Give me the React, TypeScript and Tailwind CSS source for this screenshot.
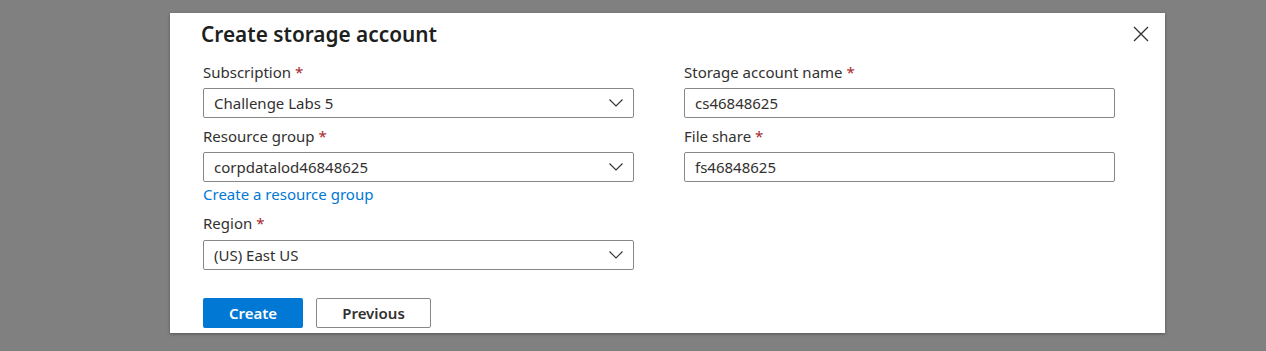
import React from "react";

const font = { fontFamily: '"Noto Sans", "Open Sans", Arial, sans-serif' };

function Label({ text }: { text: string }) {
  return (
    <div className="h-5 text-[15px] leading-5 text-[#323130]">
      {text} <span className="text-[#a4262c]">*</span>
    </div>
  );
}

function Chevron() {
  return (
    <svg width="14" height="8" viewBox="0 0 14 8" fill="none" className="text-[#323130]">
      <path d="M0.5 0.5 L7 7 L13.5 0.5" stroke="currentColor" strokeWidth="1.1" />
    </svg>
  );
}

function Select({ value }: { value: string }) {
  return (
    <div className="mt-[6px] flex h-[30px] w-[431px] items-center justify-between rounded-[2px] border border-[#8a8886] bg-white pl-[10px] pr-[10px] text-[15px] text-[#323130]">
      <span>{value}</span>
      <Chevron />
    </div>
  );
}

function Input({ value }: { value: string }) {
  return (
    <div className="mt-[6px] flex h-[30px] w-[431px] items-center rounded-[2px] border border-[#8a8886] bg-white pl-[10px] text-[15px] text-[#323130]">
      {value}
    </div>
  );
}

export default function App() {
  return (
    <div className="h-[351px] w-[1266px] overflow-hidden bg-[#808080]" style={font}>
      <div className="relative ml-[170px] mt-[13px] h-[320px] w-[995px] bg-white pl-[33px] shadow-[0_1px_3px_rgba(0,0,0,0.35)]">
        <button className="absolute right-[15px] top-[12px] flex h-[18px] w-[18px] items-center justify-center text-[#323130]">
          <svg width="16" height="16" viewBox="0 0 16 16" fill="none">
            <path d="M1 1 L15 15 M15 1 L1 15" stroke="currentColor" strokeWidth="1.3" />
          </svg>
        </button>
        <div className="-ml-[2px] h-[49px] pt-[6px] text-[20.8px] font-semibold leading-[30px] text-[#201f1e]">
          Create storage account
        </div>
        <div className="flex gap-[50px]">
          <div className="flex flex-col">
            <Label text="Subscription" />
            <Select value="Challenge Labs 5" />
            <div className="mt-[8px]">
              <Label text="Resource group" />
            </div>
            <Select value="corpdatalod46848625" />
            <div className="mt-[2px] h-5 text-[15px] leading-5 text-[#0078d4]">Create a resource group</div>
            <div className="mt-[9px]">
              <Label text="Region" />
            </div>
            <div className="mt-[1px]">
              <Select value="(US) East US" />
            </div>
          </div>
          <div className="flex flex-col">
            <Label text="Storage account name" />
            <Input value="cs46848625" />
            <div className="mt-[8px]">
              <Label text="File share" />
            </div>
            <Input value="fs46848625" />
          </div>
        </div>
        <div className="mt-[28px] flex gap-[13px]">
          <button className="h-[30px] w-[100px] rounded-[2px] bg-[#0078d4] text-[15px] font-semibold text-white">
            Create
          </button>
          <button className="h-[30px] w-[115px] rounded-[2px] border border-[#8a8886] bg-white text-[15px] font-semibold text-[#323130]">
            Previous
          </button>
        </div>
      </div>
    </div>
  );
}
